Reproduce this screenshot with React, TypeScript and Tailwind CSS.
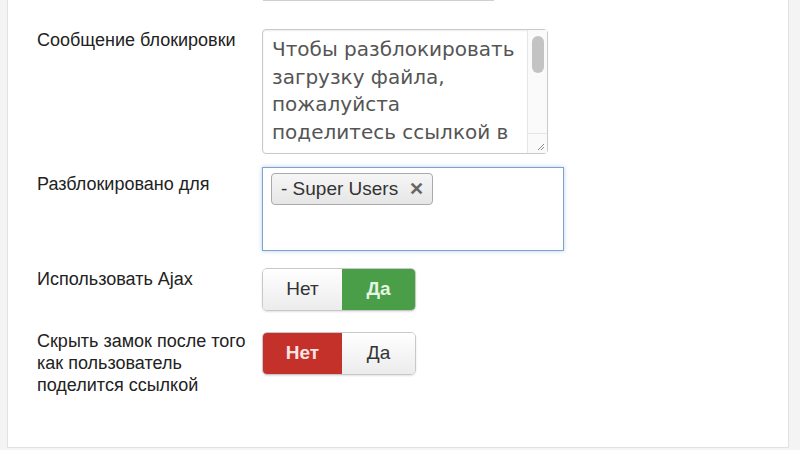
import React from "react";

const label = "w-[225px] shrink-0 pr-[12px] text-[18px] leading-[22px] text-[#222]";

function Toggle({ value }: { value: boolean }) {
  return (
    <div className="flex h-[43px] w-[154px] overflow-hidden rounded-[5px] border border-[#c8c8c8] text-[19px] shadow-[0_1px_2px_rgba(0,0,0,0.12)]">
      <div
        className={
          value
            ? "flex w-[79px] items-center justify-center bg-gradient-to-b from-[#ffffff] to-[#ececec] text-[#333]"
            : "flex w-[79px] items-center justify-center bg-[#c4312a] font-bold text-[#fbe3e1]"
        }
      >
        Нет
      </div>
      <div
        className={
          value
            ? "flex flex-1 items-center justify-center bg-[#4a9e48] font-bold text-[#e4f6e2]"
            : "flex flex-1 items-center justify-center bg-gradient-to-b from-[#ffffff] to-[#ececec] text-[#333]"
        }
      >
        Да
      </div>
    </div>
  );
}

export default function App() {
  return (
    <div
      className="h-[450px] w-[800px] overflow-hidden bg-[#f4f4f4] pl-[7px]"
      style={{ fontFamily: "'Liberation Sans', Arial, sans-serif" }}
    >
      <div className="h-[448px] w-[782px] border-b border-r border-l border-[#e2e2e2] bg-white">
        {/* previous field, scrolled out above */}
        <div className="ml-[255px] h-[1px] w-[231px] bg-[#cfcfcf]" />

        <div className="mt-[28px] flex pl-[29px]">
          <div className={label}>Сообщение блокировки</div>
          <div className="relative h-[125px] w-[286px] rounded-[4px] border border-[#c9c9c9] bg-white shadow-[inset_0_1px_2px_rgba(0,0,0,0.08)]">
            <div
              className="pl-[9px] pr-[24px] pt-[6px] text-[20px] leading-[27.5px] text-[#555]"
              style={{ fontFamily: "'DejaVu Sans', 'Open Sans', sans-serif" }}
            >
              Чтобы разблокировать загрузку файла, пожалуйста поделитесь ссылкой в
            </div>
            {/* scrollbar track with thumb and resize corner */}
            <div className="absolute right-0 top-0 flex h-full w-[20px] flex-col border-l border-[#e6e6e6] bg-[#fafafa]">
              <div className="mx-auto mt-[6px] h-[37px] w-[12px] rounded-full bg-[#c3c3c3]" />
              <div className="mt-auto flex h-[20px] items-end justify-end border-t border-[#e6e6e6] pb-[2px] pr-[2px]">
                <svg width="10" height="10" viewBox="0 0 10 10">
                  <path d="M9 3 3 9M9 6 6 9" stroke="#888" strokeWidth="1" />
                </svg>
              </div>
            </div>
          </div>
        </div>

        <div className="mt-[13px] flex pl-[29px]">
          <div className={label + " pt-[6px]"}>Разблокировано для</div>
          <div className="h-[84px] w-[302px] border border-[#7ea3cf] bg-white px-[8px] pt-[5px] shadow-[0_0_4px_rgba(110,160,220,0.5)]">
            <div className="inline-flex h-[32px] items-center gap-[11px] rounded-[4px] border border-[#aaa] bg-gradient-to-b from-[#f6f6f6] to-[#e6e6e6] pl-[9px] pr-[8px] text-[19px] text-[#333]">
              <span>- Super Users</span>
              <span className="text-[18px] font-bold text-[#666]">✕</span>
            </div>
          </div>
        </div>

        <div className="mt-[17px] flex pl-[29px]">
          <div className={label}>Использовать Ajax</div>
          <Toggle value={true} />
        </div>

        <div className="mt-[21px] flex pl-[29px]">
          <div className={label + " -mt-[2px]"}>
            Скрыть замок после того как пользователь поделится ссылкой
          </div>
          <Toggle value={false} />
        </div>
      </div>
    </div>
  );
}
